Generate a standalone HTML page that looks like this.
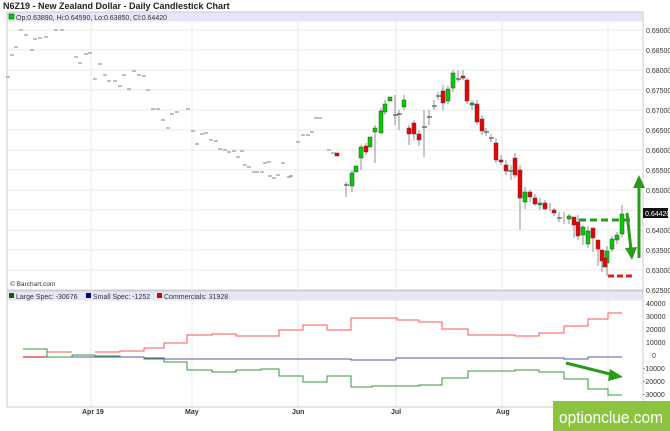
<!DOCTYPE html>
<html><head><meta charset="utf-8"><style>
body{margin:0;width:670px;height:431px;overflow:hidden;background:#fff;font-family:"Liberation Sans",sans-serif}
svg{position:absolute;left:0;top:0}
</style></head><body>
<svg width="670" height="431" viewBox="0 0 670 431" font-family="Liberation Sans, sans-serif">
<text x="3" y="9" font-size="9" font-weight="bold" fill="#222">N6Z19 - New Zealand Dollar - Daily Candlestick Chart</text>
<rect x="7" y="12" width="636" height="278" fill="#fff" stroke="#ccc"/>
<rect x="7.5" y="12.5" width="635" height="9" fill="#e6e6f8"/>
<rect x="9" y="14" width="5" height="5" fill="#0c0" stroke="#060" stroke-width=".6"/>
<text x="16" y="20" font-size="7" fill="#333">Op:0.63890, Hi:0.64590, Lo:0.63850, Cl:0.64420</text>
<g stroke="#e8e8e8" stroke-width="1">
<line x1="7" y1="30" x2="643" y2="30"/><line x1="7" y1="50" x2="643" y2="50"/><line x1="7" y1="70" x2="643" y2="70"/><line x1="7" y1="90" x2="643" y2="90"/><line x1="7" y1="110" x2="643" y2="110"/><line x1="7" y1="130" x2="643" y2="130"/><line x1="7" y1="150" x2="643" y2="150"/><line x1="7" y1="170" x2="643" y2="170"/><line x1="7" y1="190" x2="643" y2="190"/><line x1="7" y1="210" x2="643" y2="210"/><line x1="7" y1="230" x2="643" y2="230"/><line x1="7" y1="250" x2="643" y2="250"/><line x1="7" y1="270" x2="643" y2="270"/>
<line x1="91" y1="22" x2="91" y2="407"/><line x1="192" y1="22" x2="192" y2="407"/><line x1="298" y1="22" x2="298" y2="407"/><line x1="396" y1="22" x2="396" y2="407"/><line x1="502" y1="22" x2="502" y2="407"/><line x1="608" y1="22" x2="608" y2="407"/>
</g>
<g font-size="7" fill="#333">
<text x="646" y="33">0.69000</text><text x="646" y="53">0.68500</text><text x="646" y="73">0.68000</text><text x="646" y="93">0.67500</text><text x="646" y="113">0.67000</text><text x="646" y="133">0.66500</text><text x="646" y="153">0.66000</text><text x="646" y="173">0.65500</text><text x="646" y="193">0.65000</text><text x="646" y="233">0.64000</text><text x="646" y="253">0.63500</text><text x="646" y="273">0.63000</text><text x="646" y="293">0.62500</text>
</g>
<rect x="643" y="208" width="25" height="10" fill="#111"/><text x="645" y="216" font-size="7" fill="#fff">0.64420</text>
<text x="10" y="286" font-size="6.5" fill="#333">© Barchart.com</text>
<g stroke="#999" stroke-width="1.2">
<path d="M6 77h4M14 47h4M19 30h4M24 35h4M30 50h4M33 39h4M38 38h4M44 37h4M54 30h4M60 30h4M10 55h4M74 57h4M84 54h4M78 63h4M88 53h4M98 64h4M93 79h4M103 75h4M107 81h4M113 81h4M118 86h4M122 75h4M132 71h4M127 89h4M137 75h4M142 76h4M146 90h4M151 109h4M156 109h4M161 120h4M166 128h4M170 114h4M175 112h4M186 109h4M191 131h4M195 144h4M200 134h4M204 133h4M209 140h4M214 141h4M218 149h4M223 150h4M227 152h4M232 151h4M236 157h4M240 151h4M243 165h4M247 167h4M252 172h4M255 172h4M260 172h4M263 163h4M267 162h4M268 176h4M272 178h4M276 175h4M281 163h4M287 177h4M289 176h4M296 142h4M301 135h4M306 135h4M310 132h4M314 118h4M318 118h4M327 150h4M331 153h4"/>
</g>
<g stroke="#777" stroke-width=".8">
<path d="M346 182v15M352 170v22M361 145v25M366 143v12M375 125v38M381 108v25M385 100v15M395 95v30M399 110v20M404 95v15M409 125v20M414 120v20M419 130v16M424 110v47M429 110v15M434 100v10M438 92v8M443 85v25M448 86v18M453 70v22M458 70v12M463 70v10M467 78v26M472 100v10M477 100v25M482 115v20M486 128v8M491 134v8M496 138v25M501 155v10M506 160v15M511 165v15M515 153v25M520 165v65M525 187v22M530 190v12M535 194v12M540 198v12M545 200v10M550 203v8M554 208v8M559 212v10M564 212v12M569 214v10M574 218v20M578 215v25M583 225v20M588 226v22M593 238v14M598 246v20M602 254v18M607 246v30M612 236v16M617 232v12M622 205v32"/>
</g>
<g stroke="#444" stroke-width=".5">
<g fill="#0c0">
<rect x="350" y="173" width="4" height="13"/><rect x="354" y="166" width="4" height="6"/><rect x="359" y="147" width="4" height="11"/><rect x="368" y="137" width="4" height="10"/><rect x="373" y="128" width="4" height="4"/><rect x="379" y="111" width="4" height="22"/><rect x="383" y="104" width="4" height="8"/><rect x="388" y="97" width="4" height="4"/><rect x="402" y="100" width="4" height="7"/><rect x="446" y="89" width="4" height="12"/><rect x="451" y="73" width="4" height="15"/><rect x="470" y="103" width="4" height="2"/><rect x="523" y="192" width="4" height="10"/><rect x="538" y="203" width="4" height="2"/><rect x="567" y="216" width="4" height="3"/><rect x="581" y="227" width="4" height="8"/><rect x="586" y="231" width="4" height="13"/><rect x="605" y="251" width="4" height="12"/><rect x="610" y="239" width="4" height="10"/><rect x="615" y="235" width="4" height="5"/><rect x="620" y="214" width="4" height="20"/>
</g>
<g fill="#e00">
<rect x="335" y="153" width="4" height="3"/><rect x="364" y="146" width="4" height="6"/><rect x="407" y="128" width="4" height="6"/><rect x="412" y="123" width="4" height="11"/><rect x="417" y="134" width="4" height="6"/><rect x="441" y="91" width="4" height="12"/><rect x="461" y="76" width="4" height="2"/><rect x="465" y="80" width="4" height="21"/><rect x="475" y="104" width="4" height="18"/><rect x="480" y="119" width="4" height="12"/><rect x="494" y="143" width="4" height="17"/><rect x="499" y="160" width="4" height="2"/><rect x="504" y="165" width="4" height="6"/><rect x="513" y="158" width="4" height="17"/><rect x="518" y="170" width="4" height="28"/><rect x="528" y="192" width="4" height="5"/><rect x="533" y="198" width="4" height="6"/><rect x="543" y="203" width="4" height="6"/><rect x="552" y="210" width="4" height="3"/><rect x="572" y="217" width="4" height="8"/><rect x="576" y="222" width="4" height="14"/><rect x="591" y="228" width="4" height="10"/><rect x="596" y="240" width="4" height="9"/><rect x="600" y="250" width="4" height="11"/><rect x="603" y="258" width="4" height="9"/>
</g>
</g>
<g stroke="#333" stroke-width="1"><path d="M344 185h5M393 115h5M397 114h5M422 127h5M427 117h5M432 106h5M436 96h5M456 79h5M484 132h5M489 138h5M508 171h5M557 218h5"/></g>
<path d="M579 220H634" stroke="#2a9a1a" stroke-width="3" stroke-dasharray="7,4"/>
<path d="M608 276H633" stroke="#e02020" stroke-width="3" stroke-dasharray="6,3"/>
<path d="M639 258V186" stroke="#2a9a1a" stroke-width="3"/><path d="M633 188L639 175L645 188Z" fill="#2a9a1a"/>
<path d="M627 213L631 250" stroke="#2a9a1a" stroke-width="3"/><path d="M625 248L632 260L637 247Z" fill="#2a9a1a"/>
<rect x="7" y="291" width="636" height="116" fill="none" stroke="#ccc"/>
<rect x="7.5" y="291.5" width="635" height="9" fill="#e6e6f8"/>
<rect x="9" y="293" width="5" height="5" fill="#060"/><text x="16" y="299" font-size="7" fill="#333">Large Spec: -30676</text>
<rect x="86" y="293" width="5" height="5" fill="#008"/><text x="93" y="299" font-size="7" fill="#333">Small Spec: -1252</text>
<rect x="157" y="293" width="5" height="5" fill="#d00"/><text x="164" y="299" font-size="7" fill="#333">Commercials: 31928</text>
<g font-size="7" fill="#333">
<text x="646" y="306">40000</text><text x="646" y="319">30000</text><text x="646" y="332">20000</text><text x="646" y="345">10000</text><text x="652" y="358">0</text><text x="643" y="371">-10000</text><text x="643" y="384">-20000</text><text x="643" y="397">-30000</text>
</g>
<g font-size="7" fill="#333" font-weight="bold"><text x="82" y="414">Apr 19</text><text x="185" y="414">May</text><text x="292" y="414">Jun</text><text x="391" y="414">Jul</text><text x="496" y="414">Aug</text></g>
<g fill="none" stroke-width="1">
<path stroke="#f55" d="M47 352H72M95 352H120V351H144V348H164V343H187V335H212V334H236V336H279V330H303V325H327V330H351V318H397V320H419V322H442V329H468V335H515V336H539V333H564V326H588V319H608V313H622"/>
<path stroke="#c00" d="M23 357H47"/>
<path stroke="#393" d="M23 349H47V357H72V355H95V356H120V357H144V359H164V362H187V370H212V372H236V370H261V369H279V376H303V382H327V376H351V387H372V386H419V385H442V378H468V371H515V370H539V372H564V379H588V389H608V395H622"/>
<path stroke="#55a" d="M72 357H144V358H164V359H351V360H396V358H564V359H588V357H622"/>
</g>
<path d="M566 363L614 375" stroke="#2a9a1a" stroke-width="3"/><path d="M610 369L623 377L608 381Z" fill="#2a9a1a"/>
<rect x="553" y="401" width="117" height="30" fill="#8cc43f"/>
<text x="611" y="423" font-size="17" fill="#fff" text-anchor="middle" textLength="104" lengthAdjust="spacingAndGlyphs">optionclue.com</text>
</svg>
</body></html>
